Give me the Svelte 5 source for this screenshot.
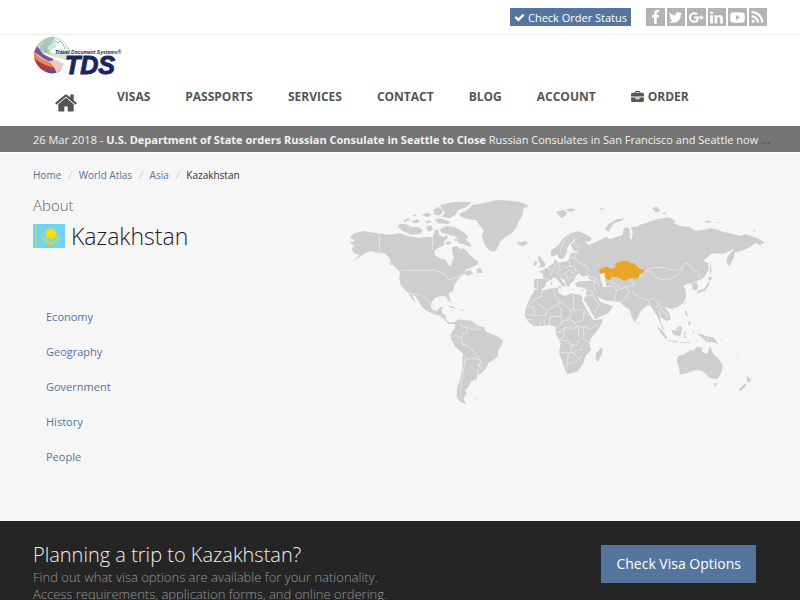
<script>
	const socials = [
		{ name: 'Facebook', d: 'M1343 12v264h-157q-86 0-116 36t-30 108v189h293l-39 296h-254v759h-306v-759h-255v-296h255v-218q0-186 104-288.5t277-102.5q147 0 228 12z' },
		{ name: 'Twitter', d: 'M1684 408q-67 98-162 167 1 14 1 42 0 130-38 259.5t-115.5 248.5-184.5 210.5-258 146-323 54.5q-271 0-496-145 35 4 78 4 225 0 401-138-105-2-188-64.5t-114-159.5q33 5 61 5 43 0 85-11-112-23-185.5-111.5t-73.5-205.5v-4q68 38 146 41-66-44-105-115t-39-154q0-88 44-163 121 149 294.5 238.5t371.5 99.5q-8-38-8-74 0-134 94.5-228.5t228.5-94.5q140 0 236 102 109-21 205-78-37 115-142 178 93-10 186-50z' },
		{ name: 'Google Plus', d: 'M620 780h560q90 740-560 740A620 620 0 0 1 620 270q240 0 420 155L860 600Q760 510 620 510a382 382 0 0 0 0 770q260 0 320-270H620zM1400 650h160v170h180v160h-180v180h-160V980h-170V820h170z' },
		{ name: 'LinkedIn', d: 'M477 625v991h-330v-991h330zm21-306q1 73-50.5 122t-135.5 49h-2q-82 0-132-49t-50-122q0-74 51.5-122.5t134.5-48.5 133 48.5 51 122.5zm1166 729v568h-329v-530q0-105-40.5-164.5t-126.5-59.5q-63 0-105.5 34.5t-63.5 85.5q-11 30-11 81v553h-329q2-399 2-647t-1-296l-1-48h329v144h-2q20-32 41-56t56.5-52 87-43.5 114.5-15.5q171 0 275 113.5t104 332.5z' },
		{ name: 'YouTube', d: 'M300 290q596-60 1192 0 240 20 260 240 40 366 0 732-20 220-260 240-596 60-1192 0-240-20-260-240-40-366 0-732 20-220 260-240zM711 600v600l500-300z' },
		{ name: 'RSS', d: 'M576 1344q0 80-56 136t-136 56-136-56-56-136 56-136 136-56 136 56 56 136zm512 123q2 28-17 48-18 21-47 21h-135q-25 0-43-16.5t-20-41.5q-22-229-184.5-391.5t-391.5-184.5q-25-2-41.5-20t-16.5-43v-135q0-29 21-47 17-17 43-17h5q160 13 306 80.5t259 181.5q114 113 181.5 259t80.5 306zm512 2q2 27-18 47-18 20-46 20h-143q-26 0-44.5-17.5t-19.5-42.5q-12-215-101-408.5t-231.5-336-336-231.5-408.5-102q-25-1-42.5-19.5t-17.5-43.5v-143q0-28 20-46 18-18 44-18h3q262 13 501.5 120t425.5 294q187 186 294 425.5t120 501.5z' },
	];
	const nav = ['Visas', 'Passports', 'Services', 'Contact', 'Blog', 'Account'];
	const crumbs = ['Home', 'World Atlas', 'Asia'];
	const topics = ['Economy', 'Geography', 'Government', 'History', 'People'];
</script>

<div class="topbar">
	<a class="status" href="#status">
		<svg viewBox="0 0 1792 1792"><path d="M1671 566q0 40-28 68l-724 724-136 136q-28 28-68 28t-68-28l-136-136-362-362q-28-28-28-68t28-68l136-136q28-28 68-28t68 28l294 295 656-657q28-28 68-28t68 28l136 136q28 28 28 68z" /></svg>
		Check Order Status
	</a>
	<div class="socials">
		{#each socials as s}
			<a href="#social" aria-label={s.name}><svg viewBox="0 0 1792 1792"><path fill-rule="evenodd" d={s.d} /></svg></a>
		{/each}
	</div>
</div>

<header>
	<a class="logo" href="#home" aria-label="Travel Document Systems">
		<svg viewBox="0 0 96 46" width="96" height="46">
			<path fill="#cfe3d6" d="M19 1a18 18 0 0 0-17 14l34 10a18 18 0 0 0-17-24z" />
			<path fill="#a8c9b4" d="M9 6Q14 0 22 1l-3 6-5 5 3 3-5 2-6-4z" />
			<path fill="#fff" d="M22 3l9 3 3 8-7-1-6 5-4-3 6-4z" />
			<path fill="#7d52a0" d="M4 10l-3 6 10 7 12 6-3-6-10-5z" />
			<path fill="#e08a55" d="M1 16v6q8 8 26 12l-3-6Q9 25 1 16z" />
			<path fill="#b83a3c" d="M1 22q2 7 7 11l18 3 2-3Q12 31 1 22z" />
			<path fill="#5a4f9c" d="M7 32q7 7 16 5l4-3Q15 35 7 32z" />
			<path fill="#f0c9bd" d="M16 25l8-1 7 4-4 6-3 4-3-7z" />
			<path fill="none" stroke="#8db3a1" d="M22 5l3 2 2-2 3 3 2 5M4 11l4-5M12 14l5 4" />
			<text x="22" y="18" class="tagline">Travel Document Systems®</text>
			<text x="32" y="38" class="tds">TDS</text>
		</svg>
	</a>
	<nav>
		<a class="home" href="#home" aria-label="Home"><svg viewBox="0 0 1792 1792"><path d="M1472 992v480q0 26-19 45t-45 19h-384v-384h-256v384h-384q-26 0-45-19t-19-45v-480q0-1 .5-3t.5-3l575-474 575 474q1 2 1 6zm223-69l-62 74q-8 9-21 11h-3q-13 0-21-7l-692-577-692 577q-12 8-24 7-13-2-21-11l-62-74q-8-10-7-23.5t11-21.5l719-599q32-26 76-26t76 26l244 204v-195q0-14 9-23t23-9h192q14 0 23 9t9 23v408l219 182q10 8 11 21.5t-7 23.5z" /></svg></a>
		{#each nav as item}
			<a href="#nav">{item}</a>
		{/each}
		<a class="order" href="#order">
			<svg viewBox="0 0 14 12"><path fill-rule="evenodd" d="M4 2V1l1-1h4l1 1v1h3l1 1v3H0V3l1-1zm1 0h4V1H5zM0 7h5v2h4V7h5v4l-1 1H1l-1-1zM6 7h2v1H6z" /></svg>
			Order
		</a>
	</nav>
</header>

<div class="ticker">
	<p>26 Mar 2018 - <b>U.S. Department of State orders Russian Consulate in Seattle to Close</b> Russian Consulates in San Francisco and Seattle now <span>...</span></p>
</div>

<main>
	<div class="crumbs">
		{#each crumbs as c}
			<a href="#crumb">{c}</a><i>/</i>
		{/each}
		<span>Kazakhstan</span>
	</div>
	<div class="columns">
		<div>
			<div class="about">About</div>
			<h1>
				<svg viewBox="0 0 32 24" width="32" height="24">
					<path fill="#6fd3f2" d="M0 0h32v24H0z" />
					<path stroke="#c9dc5a" stroke-width="2" stroke-dasharray="2 1" d="M3 1v22" />
					<circle cx="18" cy="10" r="5" fill="#ffe000" />
					<circle cx="18" cy="10" r="6" fill="none" stroke="#ffe000" stroke-dasharray="1 1" />
					<path fill="none" stroke="#cfdb45" stroke-width="2" d="M9 13q3 2 5 5 4 3 8 0 3-3 5-5M15 20h6" />
				</svg>
				Kazakhstan
			</h1>
			<ul>
				{#each topics as t}
					<li><a href="#topic">{t}</a></li>
				{/each}
			</ul>
		</div>

		<svg class="map" viewBox="15 15 1266 645" role="img" aria-label="World map">
			<!-- North America and Greenland -->
			<path d="M28 142L45 130 68 123 100 128 135 133 150 134 180 130 205 138 235 144 262 140 278 143 285 120 295 118 298 135 310 142 318 135 325 142 312 155 313 165 298 172 283 182 284 195 300 204 318 210 325 225 333 228 337 212 342 205 338 190 335 172 350 168 362 178 372 175 385 190 400 205 415 215 412 225 395 232 380 238 375 245 390 240 400 250 385 258 372 252 360 260 350 275 343 285 340 300 325 312 331 328 332 338 322 328 318 320 305 318 288 322 275 335 272 348 278 360 292 362 300 352 308 350 305 365 308 372 318 375 318 390 328 398 342 396 348 401 325 402 312 388 295 376 280 372 260 362 245 350 238 335 225 318 216 315 230 342 214 325 205 308 195 300 182 285 178 265 180 245 165 232 155 220 148 205 135 190 115 188 90 183 75 190 60 200 38 215 58 195 40 188 35 175 45 168 28 158 45 152Z" />
			<path d="M183 120L178 108 200 102 210 110 235 112 248 120 240 132 215 134 200 128ZM172 112L180 101 198 103 188 118ZM188 92L205 83 210 90 195 96ZM212 95L232 88 240 96 225 100ZM245 75L262 68 275 74 262 82ZM280 60L295 50 310 62 300 76 284 74ZM300 45L340 36 395 37 380 50 355 60 345 75 330 85 305 80 315 68 305 55ZM283 90L300 85 332 96 325 102 295 100ZM258 110L272 105 280 118 265 125ZM300 118L320 108 345 112 370 125 385 140 378 150 395 165 390 172 370 162 355 160 350 140 330 135 305 128ZM315 160l12-8 8 8-12 5zM342 148l8-4 2 8-8 2zM408 240L420 232 428 248 412 250ZM147 216l8 4 2 8-6-4zM216 78l10-5 4 5zM255 95l14-4 6 6-14 4z" />
			<path d="M358 72L378 62 398 45 430 40 470 30 510 32 540 36 568 48 550 55 548 75 535 95 530 110 515 130 495 142 480 155 472 175 462 186 445 180 432 160 425 135 432 122 418 105 408 90 385 88 362 80Z" />
			<path class="line" d="M118 130V188L135 192 152 208M182 241H280L300 245 320 258 325 270 350 262 375 250M205 310L235 314 250 320 272 338M280 372L290 362M305 372L300 378M318 376L308 384M278 143V180" />

			<!-- South America -->
			<g transform="translate(270 300)">
				<path d="M75 95L85 88 95 90 125 92 140 105 162 112 168 125 200 138 218 150 218 160 205 180 203 200 175 220 168 235 155 250 142 255 140 268 122 275 115 290 105 300 110 310 100 325 105 335 108 343 90 335 80 320 82 290 90 270 97 235 98 190 75 170 62 145 65 125 75 115ZM52 45L70 50 80 58 62 52ZM88 58l14 2-4 4zM130 325h12l-4 3zM62 61h6v3z" />
				<path class="line" d="M90 92L95 108 110 112 112 128 98 130 94 145 78 136 66 140M112 112L125 116 138 106M128 118L140 122 142 108M150 110V122M94 145L98 165 105 165 118 168 132 188 150 208 156 220 145 222 158 240M98 190L108 208 130 205 150 210M105 208L100 240 94 280 90 320M140 225L150 225M148 228L142 252" />
			</g>

			<!-- Europe, Asia and Africa -->
			<g transform="translate(510 0)">
				<path d="M122 195L122 182 145 165 160 145 180 130 205 124 225 132 245 145 240 155 225 152 235 165 250 160 270 150 290 140 300 148 320 140 338 135 340 118 350 110 358 118 360 145 365 150 368 125 362 112 380 110 390 104 410 98 440 88 475 82 498 92 490 100 510 108 540 112 555 122 590 118 605 114 640 125 660 130 690 138 705 132 735 142 765 157 750 165 735 160 720 172 695 182 675 187 672 200 658 230 648 215 655 195 670 180 675 175 655 185 640 192 605 190 580 212 595 220 595 240 585 258 572 268 558 275 565 290 560 300 548 300 547 285 535 280 520 288 527 300 528 320 520 340 500 352 485 356 465 352 478 370 482 388 470 394 458 385 450 380 452 398 464 420 456 415 448 392 440 375 435 368 420 346 410 348 392 362 385 378 375 398 365 380 358 358 345 352 332 337 310 334 290 332 262 320 270 335 288 342 310 348 295 370 275 378 255 388 248 375 235 350 220 328 228 318 230 298 215 292 200 292 195 280 210 274 245 272 232 262 238 255 218 260 205 250 195 262 190 275 180 280 178 292 170 288 165 272 150 262 155 272 168 285 158 292 150 278 135 262 125 268 110 275 105 290 90 300 72 292 72 268 100 266 98 250 85 245 100 240 115 230 130 220 135 208 145 218 175 212 182 190 205 185 190 180 182 165 195 150 185 155 170 175 172 185 160 205 150 208 140 192 130 200Z" />
				<path d="M20 155L32 158 45 152 54 160 40 168 26 165ZM138 65L160 60 172 68 165 78 155 84 145 75ZM165 60L185 55 198 60 180 66ZM265 56l20-2-10 6zM285 118L295 102 320 88 342 85 335 92 312 100 302 115 295 125ZM85 195L95 205 106 222 104 230 85 233 92 222 85 212ZM72 215L82 213 80 226 70 228ZM140 288l14 2-4 6zM123 274l4 2-1 10-4-2zM178 298h12v2zM215 300l9-2-4 4z" />
				<path d="M425 55L440 50 452 62 440 68ZM452 70l15-3v6zM582 92L605 92 600 98 585 97ZM614 96h12v3zM728 122l10-1-4 4zM595 262L605 260 607 268 595 272ZM598 272L597 285 585 302 568 308 560 312 562 302 580 298 590 285ZM602 218L605 245 600 252 598 235Z" />
				<path class="sea" d="M270 255L282 248 288 258 284 268 290 290 280 292 274 276Z" />
				<path class="line" d="M190 140L195 160 205 170 202 182 195 200 202 215 215 222 230 228 238 245M182 132Q160 150 158 165L150 185M135 218L138 232 128 240 122 255M110 230L125 240M145 218L148 228 165 232 180 228 195 232 198 245M152 240L138 248 150 255 165 250 178 240M165 250L172 262 190 262M178 215L180 230M180 245L195 250M98 265L122 270M82 270V292M172 262L175 275M145 232L155 240M178 200L195 205M245 272L262 275 268 290M235 258L262 268M255 268L250 290 262 310M225 300L245 302 252 318M228 318L245 315 270 345 260 355 255 370M290 290L310 288 320 300 315 325 310 334M300 270L310 278 330 290M320 300L345 292 362 288 375 282M345 292L360 300 345 325 332 336M375 282L360 270M385 266L400 255 412 238 430 255 450 268 480 268 508 250 520 240 505 240 480 238 458 232 440 232 412 238M508 240L525 220 542 225 550 240 568 248 568 262M365 302L375 312 395 325 415 330 432 325 445 340 438 355M415 332L420 346M445 340L455 350 465 352M450 350L458 365 470 372 472 385M448 358L450 380M558 275L540 282" />
				<path class="land2" d="M267 240L275 233 292 230 305 237 318 232 315 220 340 212 352 213 362 220 372 220 388 236 405 240 398 250 388 253 385 266 362 264 342 273 328 264 305 260 300 270 290 267 283 260 286 250 270 248Z" />
				<g transform="translate(0 270)">
					<path d="M75 28L100 30 128 24 145 25 145 38 165 48 185 40 212 45 218 52 215 60 228 85 240 105 250 120 278 118 275 130 260 155 240 178 238 195 243 210 225 230 222 245 205 272 190 278 172 282 165 270 155 240 147 218 152 190 145 175 135 158 138 142 120 135 90 138 70 138 50 120 45 105 48 80 60 55ZM275 202L278 215 265 245 257 240 258 220Z" />
					<path class="line" d="M98 30L95 48 70 60 55 76M70 60L110 90 142 75 148 65 135 48 128 28M110 90L108 105 85 108 50 104M48 80L70 82 75 105M148 65L182 90 182 108 165 120M190 42V90H228M142 75L155 85 152 108 120 110M120 110L118 135M152 108L158 125 145 140M158 125L182 118 195 128 220 120 222 95M182 118L205 140 188 145 165 142 150 155 138 158M205 140L225 140 240 148 255 138 265 132M222 95L238 108M205 145V165L212 172 238 188M165 142L160 170 148 180M150 180L172 182 182 195 200 195 208 178M147 218L190 218 200 212 215 208 215 195M190 195L182 205 185 218M175 220L172 250 168 262M190 220L205 235 190 250 172 250M205 235L218 228M222 170L220 142M90 138L92 122M75 135L70 120 50 118M105 135L102 115M135 158H152M205 235L215 245" />
				</g>
			</g>

			<!-- Oceania -->
			<g transform="translate(870 270)">
				<path d="M140 240L145 228 165 222 180 210 190 212 200 200 218 203 215 215 232 222 240 198 250 222 268 240 278 255 275 275 262 298 240 295 225 280 215 272 195 270 170 280 148 284 148 268ZM250 310l12 0-6 10zM350 285L358 295 365 298 357 310 350 300ZM345 310L350 316 332 333 325 330ZM200 160L215 162 225 168 250 172 265 192 245 185 232 188 215 172ZM125 150L135 150 150 136 157 145 150 168 130 165ZM80 138L95 150 112 172 108 178 92 160ZM112 180L145 184 140 187 115 183ZM162 155h8l-6 8 4 10h-6zM165 90l5 2 2 12 5 6-10-4zM175 125h8l-2 10-8-2zM22 125l5 5-3 5zM165 70l3-4-1 10zM125 88l5 1-4 4zM268 175l8 4-3 1zM318 230l8 4-2 2zM362 218l8 1-4 2zM150 187h30v2h-30zM188 150l4 4-2 8z" />
				<path class="line" d="M232 165V188M130 152L152 148" />
			</g>
		</svg>
	</div>
</main>

<footer>
	<div>
		<h2>Planning a trip to Kazakhstan?</h2>
		<p>Find out what visa options are available for your nationality.<br />Access requirements, application forms, and online ordering.</p>
	</div>
	<a class="check" href="#visas">Check Visa Options</a>
</footer>

<style>
	:global(body) {
		background: #222;
		font-family: "Open Sans", sans-serif;
		font-size: 11px;
	}
	a {
		color: #54759e;
		text-decoration: none;
	}
	svg {
		flex: none;
		fill: currentColor;
	}
	.topbar {
		display: flex;
		justify-content: flex-end;
		align-items: center;
		gap: 15px;
		height: 34px;
		padding: 0 33px;
		background: #fff;
		border-bottom: 1px solid #eee;
	}
	.status {
		display: flex;
		align-items: center;
		gap: 3px;
		height: 18px;
		padding: 0 4px;
		background: #54759e;
		color: #fff;
	}
	.status svg {
		width: 11px;
		height: 11px;
	}
	.socials {
		display: grid;
		grid-template-columns: repeat(6, 1fr);
		gap: 2px;
		width: 121px;
	}
	.socials a {
		display: flex;
		align-items: center;
		justify-content: center;
		height: 18px;
		background: #b3b3b3;
		color: #fff;
	}
	.socials svg {
		width: 15px;
		height: 15px;
	}
	header {
		height: 91px;
		padding: 0 33px;
		background: #fff;
	}
	.logo {
		display: block;
		height: 42px;
		padding-top: 1px;
	}
	.tagline {
		font: italic bold 5px "Liberation Sans", sans-serif;
		fill: #1b2660;
	}
	.tds {
		font: italic bold 25px "Liberation Sans", sans-serif;
		fill: #1b2660;
		stroke: #1b2660;
	}
	nav {
		display: flex;
		align-items: center;
		gap: 35px;
		height: 37px;
		padding-left: 21px;
	}
	nav a {
		color: #555;
		font-size: 12px;
		font-weight: 700;
		text-transform: uppercase;
	}
	.home {
		padding: 12px 4px 0 0;
	}
	.home svg {
		display: block;
		width: 24px;
		height: 24px;
	}
	.order {
		display: flex;
		align-items: center;
		gap: 4px;
	}
	.order svg {
		width: 13px;
		height: 11px;
	}
	.ticker {
		padding: 1px 28px 0 33px;
		background: #757575;
		border-bottom: 1px solid #fff;
		color: #f2f2f2;
		font-size: 11px;
		line-height: 25px;
	}
	.ticker p {
		margin: 0;
		overflow: hidden;
		white-space: nowrap;
	}
	.ticker span {
		color: #444;
	}
	main {
		min-height: 353px;
		padding: 15px 33px 0;
		background: #f6f6f6;
	}
	.crumbs {
		display: flex;
		gap: 7px;
		font-size: 10px;
		line-height: 15px;
		color: #333;
	}
	.crumbs i {
		color: #ccc;
	}
	.columns {
		display: grid;
		grid-template-columns: 17fr 23fr;
		align-items: start;
	}
	.about {
		padding-top: 11px;
		color: #666;
		font-size: 15px;
		font-weight: 300;
		line-height: 22px;
	}
	h1 {
		display: flex;
		align-items: center;
		gap: 6px;
		margin: 0;
		color: #1d2127;
		font-size: 23px;
		font-weight: 300;
		line-height: 40px;
	}
	ul {
		margin: 43px 0 0;
		padding: 0 13px;
		list-style: none;
	}
	li {
		line-height: 35px;
	}
	.map {
		display: block;
		width: 100%;
		margin-top: 12px;
		fill: #cecece;
	}
	.line {
		fill: none;
		stroke: #f0f0f0;
		stroke-width: 2;
	}
	.sea {
		fill: #f6f6f6;
	}
	.land2 {
		fill: #e8a526;
	}
	footer {
		display: flex;
		justify-content: space-between;
		align-items: flex-start;
		padding: 20px 44px 20px 33px;
		background: #252525;
	}
	h2 {
		margin: 0;
		color: #eee;
		font-size: 20px;
		font-weight: 300;
		line-height: 28px;
	}
	footer p {
		margin: 0;
		color: #999;
		font-size: 13px;
		font-weight: 300;
		line-height: 17px;
	}
	.check {
		margin-top: 4px;
		padding: 0 15px;
		background: #54759e;
		color: #fff;
		font-size: 14px;
		line-height: 38px;
	}
</style>
